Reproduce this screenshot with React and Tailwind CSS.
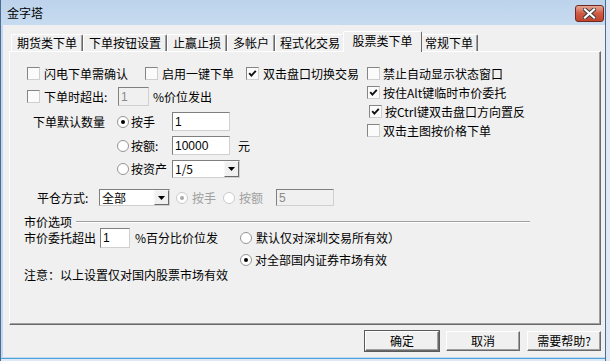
import React from 'react';

function Check({ checked, className = '' }) {
  return (
    <span
      className={`flex-none w-[13px] h-[13px] flex items-center justify-center border border-t-[#858585] border-l-[#858585] border-r-[#cfcfcf] border-b-[#cfcfcf] bg-[#fbfbfb] ${className}`}
    >
      {checked && (
        <svg width="9" height="9" viewBox="0 0 9 9">
          <path d="M1.2 4.2 L3.4 6.6 L7.8 1.8" fill="none" stroke="#111" strokeWidth="1.9" />
        </svg>
      )}
    </span>
  );
}

function Radio({ checked, disabled }) {
  return (
    <span
      className={`flex-none w-[12px] h-[12px] rounded-full flex items-center justify-center bg-white border ${
        disabled ? 'border-[#cacaca]' : 'border-[#959595]'
      }`}
    >
      {checked && (
        <span className={`w-[4px] h-[4px] rounded-full ${disabled ? 'bg-[#a8a8a8]' : 'bg-black'}`} />
      )}
    </span>
  );
}

function Field({ value, className = '', disabled }) {
  return (
    <span
      className={`flex-none flex items-center pl-[2px] border border-t-[#7f7f7f] border-l-[#7f7f7f] border-r-[#d0d0d0] border-b-[#d0d0d0] font-['Liberation_Sans',sans-serif] text-[12px] ${
        disabled ? 'bg-[#f0f0f0] text-[#8a8a8a]' : 'bg-white text-black'
      } ${className}`}
    >
      {value}
    </span>
  );
}

function Select({ value, className = '' }) {
  return (
    <span
      className={`flex-none flex items-stretch bg-white border border-t-[#7f7f7f] border-l-[#7f7f7f] border-r-[#d0d0d0] border-b-[#d0d0d0] ${className}`}
    >
      <span className="flex-1 flex items-center pl-[2px]">{value}</span>
      <span className="w-[15px] flex items-center justify-center bg-[#f0f0f0] border border-t-[#f8f8f8] border-l-[#f8f8f8] border-r-[#6a6a6a] border-b-[#6a6a6a]">
        <svg width="7" height="4" viewBox="0 0 7 4">
          <path d="M0 0 H7 L3.5 4 Z" fill="#000" />
        </svg>
      </span>
    </span>
  );
}

function Btn({ children, isDefault }) {
  return (
    <button
      className={`w-[74px] h-[20px] flex items-center justify-center bg-[#f0f0f0] border border-t-white border-l-white border-r-[#696969] border-b-[#696969] shadow-[inset_-1px_-1px_0_#a0a0a0] ${
        isDefault ? 'outline outline-1 outline-[#5a5a5a]' : ''
      }`}
    >
      {children}
    </button>
  );
}

const tabs = [
  { label: '期货类下单', w: 'w-[72px]' },
  { label: '下单按钮设置', w: 'w-[84px]' },
  { label: '止赢止损', w: 'w-[60px]' },
  { label: '多帐户', w: 'w-[48px]' },
  { label: '程式化交易', w: 'w-[70px]' },
  { label: '股票类下单', w: 'w-[79px]', active: true },
  { label: '常规下单', w: 'w-[58px]' },
];

export default function App() {
  return (
    <div className="w-[610px] h-[361px] flex bg-[#dfe9f5] font-['Noto_Sans_CJK_SC',sans-serif] text-[12px] leading-[14px] text-black overflow-hidden">
      <div className="w-[606px] h-full flex flex-col bg-[#c4d9ef] border-l border-r border-[#4b6d93]">
        {/* Title bar */}
        <div className="h-[25px] flex-none flex justify-between bg-gradient-to-b from-[#bcd3eb] to-[#c7dbf0]">
          <span className="pl-[6px] pt-[6px] text-[12px]">金字塔</span>
          <span className="mt-[5px] mr-[1px] w-[29px] h-[17px] rounded-[3px] border border-[#6e2a22] bg-gradient-to-b from-[#e6a595] via-[#cf5a43] to-[#c0432c] flex items-center justify-center">
            <svg width="13" height="11" viewBox="0 0 13 11">
              <path d="M2 1.5 L11 9.5 M11 1.5 L2 9.5" stroke="#3a3a3a" strokeWidth="4" strokeLinecap="square" />
              <path d="M2 1.5 L11 9.5 M11 1.5 L2 9.5" stroke="#ffffff" strokeWidth="2.2" strokeLinecap="square" />
            </svg>
          </span>
        </div>

        {/* Body */}
        <div className="flex-1 ml-[2px] bg-[#f0f0f0] flex flex-col pt-[6px]">
          {/* Tabs */}
          <div className="h-[20px] flex items-end ml-[8px]">
            {tabs.map((t) =>
              t.active ? (
                <div
                  key={t.label}
                  className={`${t.w} -mx-[2px] -mb-[1px] h-[21px] relative z-10 flex items-start justify-center pt-[2px] bg-[#f0f0f0] border-t border-l border-t-white border-l-white border-r border-r-[#696969] rounded-t-[2px]`}
                >
                  {t.label}
                </div>
              ) : (
                <div
                  key={t.label}
                  className={`${t.w} h-[17px] flex items-center justify-center bg-[#f0f0f0] border-t border-l border-t-white border-l-white border-r border-r-[#696969] shadow-[inset_-1px_0_0_#a0a0a0] rounded-t-[2px]`}
                >
                  {t.label}
                </div>
              )
            )}
          </div>

          {/* Panel */}
          <div className="ml-[6px] mr-[4px] h-[274px] flex flex-col pt-[12px] border-t border-l border-t-white border-l-white border-r border-b border-r-[#696969] border-b-[#696969] shadow-[inset_-1px_-1px_0_#a0a0a0]">
            <div className="flex ml-[17px]">
              {/* Left column */}
              <div className="w-[340px] flex flex-col">
                <div className="h-[19px] flex items-center">
                  <span className="w-[118px] flex items-center gap-[4px]">
                    <Check />
                    闪电下单需确认
                  </span>
                  <span className="w-[101px] flex items-center gap-[4px]">
                    <Check />
                    启用一键下单
                  </span>
                  <span className="w-[121px] flex items-center gap-[4px]">
                    <Check checked />
                    双击盘口切换交易
                  </span>
                </div>

                <div className="mt-[4px] h-[19px] flex items-center">
                  <span className="w-[91px] flex items-center gap-[4px]">
                    <Check />
                    下单时超出:
                  </span>
                  <Field value="1" disabled className="w-[31px] h-[19px]" />
                  <span className="ml-[4px]">%价位发出</span>
                </div>

                <div className="mt-[6px] flex">
                  <span className="w-[90px] pl-[6px] h-[19px] flex items-center">下单默认数量</span>
                  <div className="flex flex-col">
                    <div className="h-[19px] flex items-center">
                      <Radio checked />
                      <span className="ml-[2px] w-[41px]">按手</span>
                      <Field value="1" className="w-[58px] h-[19px]" />
                    </div>
                    <div className="mt-[5px] h-[19px] flex items-center">
                      <Radio />
                      <span className="ml-[2px] w-[41px]">按额:</span>
                      <Field value="10000" className="w-[58px] h-[19px]" />
                      <span className="ml-[8px]">元</span>
                    </div>
                    <div className="mt-[5px] h-[18px] flex items-center">
                      <Radio />
                      <span className="ml-[2px] w-[41px]">按资产</span>
                      <Select value="1/5" className="w-[68px] h-[18px]" />
                    </div>
                  </div>
                </div>

                <div className="mt-[11px] h-[17px] flex items-center">
                  <span className="ml-[10px] w-[62px]">平仓方式:</span>
                  <Select value="全部" className="w-[71px] h-[17px]" />
                  <span className="ml-[6px]">
                    <Radio checked disabled />
                  </span>
                  <span className="ml-[4px] text-[#a0a0a0]">按手</span>
                  <span className="ml-[7px]">
                    <Radio disabled />
                  </span>
                  <span className="ml-[4px] text-[#a0a0a0]">按额</span>
                  <Field value="5" disabled className="ml-[13px] w-[58px] h-[17px]" />
                </div>
              </div>

              {/* Right column */}
              <div className="flex flex-col">
                <div className="h-[19px] flex items-center gap-[3px]">
                  <Check />
                  禁止自动显示状态窗口
                </div>
                <div className="h-[19px] flex items-center gap-[3px]">
                  <Check checked />
                  按住Alt键临时市价委托
                </div>
                <div className="h-[19px] ml-[2px] flex items-center gap-[3px]">
                  <Check checked />
                  按Ctrl键双击盘口方向置反
                </div>
                <div className="h-[19px] flex items-center gap-[3px]">
                  <Check />
                  双击主图按价格下单
                </div>
              </div>
            </div>

            {/* 市价选项 group */}
            <div className="mt-[9px] ml-[14px] h-[13px] flex items-center">
              <span>市价选项</span>
              <span className="ml-[4px] w-[454px] h-[2px] border-t border-t-[#a0a0a0] border-b border-b-white" />
            </div>
            <div className="ml-[14px] h-[20px] flex items-center">
              <span className="w-[76px]">市价委托超出</span>
              <Field value="1" className="w-[30px] h-[20px]" />
              <span className="ml-[5px] w-[105px]">%百分比价位发</span>
              <Radio />
              <span className="ml-[4px]">默认仅对深圳交易所有效）</span>
            </div>
            <div className="mt-[4px] ml-[230px] h-[16px] flex items-center">
              <Radio checked />
              <span className="ml-[3px]">对全部国内证券市场有效</span>
            </div>
            <div className="ml-[14px] h-[14px] flex items-center">注意：以上设置仅对国内股票市场有效</div>
          </div>

          {/* Buttons */}
          <div className="mt-[6px] mr-[4px] flex justify-end gap-[7px]">
            <Btn isDefault>确定</Btn>
            <Btn>取消</Btn>
            <Btn>需要帮助?</Btn>
          </div>
        </div>

        <div className="h-[1px] flex-none bg-[#c4d9ef]" />
        <div className="h-[1px] flex-none bg-[#4fa3dc]" />
        <div className="h-[2px] flex-none bg-[#dfe9f5]" />
      </div>
    </div>
  );
}
